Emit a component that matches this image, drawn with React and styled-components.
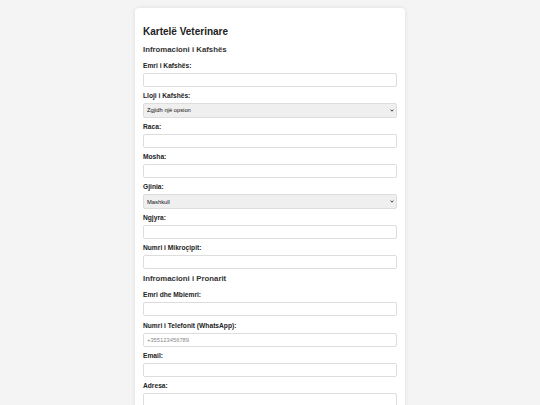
import React from "react";
import styled, { createGlobalStyle } from "styled-components";

const Global = createGlobalStyle`
  html, body {
    margin: 0;
    padding: 0;
    background: #f4f4f4;
    font-family: "Liberation Sans", Arial, sans-serif;
  }
  * { box-sizing: border-box; }
`;

const Page = styled.div`
  padding: 8px 0 16px;
`;

const Card = styled.form`
  width: 270px;
  margin: 0 auto;
  background: #ffffff;
  border-radius: 4px;
  box-shadow: 0 0 4px rgba(0, 0, 0, 0.1);
  padding: 18px 8px 10px;
`;

const Title = styled.h1`
  margin: 0 0 7px;
  font-size: 10px;
  line-height: 12px;
  font-weight: bold;
  color: #222;
`;

const Section = styled.h2`
  margin: ${(p) => (p.$first ? "0" : "5px")} 0 7px;
  font-size: 7.8px;
  line-height: 10px;
  font-weight: bold;
  color: #333;
`;

const Field = styled.div`
  margin-bottom: 5.2px;
`;

const Label = styled.label`
  display: block;
  font-size: 6.67px;
  line-height: 8px;
  font-weight: bold;
  color: #222;
  margin-bottom: 3px;
`;

const Input = styled.input`
  display: block;
  width: 100%;
  height: 14px;
  margin: 0;
  padding: 0 3px;
  border: 1px solid #dddddd;
  border-radius: 2px;
  background: #ffffff;
  font-family: "Liberation Sans", Arial, sans-serif;
  font-size: 5.8px;
  color: #222;
  outline: none;
  &::placeholder {
    color: #8a8a8a;
  }
`;

const SelectWrap = styled.div`
  position: relative;
`;

const Select = styled.select`
  display: block;
  width: 100%;
  height: 14.5px;
  margin: 0;
  padding: 0 3px;
  border: 1px solid #dddddd;
  border-radius: 2px;
  background-color: #efefef;
  font-family: "Liberation Sans", Arial, sans-serif;
  font-size: 5.8px;
  color: #111;
  outline: none;
  appearance: none;
  -webkit-appearance: none;
`;

const Chevron = styled.svg`
  position: absolute;
  right: 3px;
  top: 50%;
  width: 4px;
  height: 3px;
  margin-top: -1.5px;
  pointer-events: none;
`;

const petFields = [
  { label: "Emri i Kafshës:" },
  { label: "Lloji i Kafshës:", options: ["Zgjidh një opsion", "Qen", "Mace", "Tjetër"] },
  { label: "Raca:" },
  { label: "Mosha:" },
  { label: "Gjinia:", options: ["Mashkull", "Femër"] },
  { label: "Ngjyra:" },
  { label: "Numri i Mikroçipit:" },
];

const ownerFields = [
  { label: "Emri dhe Mbiemri:" },
  { label: "Numri i Telefonit (WhatsApp):", placeholder: "+355123456789" },
  { label: "Email:" },
  { label: "Adresa:" },
];

function FormField({ f, id }) {
  return (
    <Field>
      <Label htmlFor={id}>{f.label}</Label>
      {f.options ? (
        <SelectWrap>
          <Select id={id} defaultValue={f.options[0]}>
            {f.options.map((o) => (
              <option key={o}>{o}</option>
            ))}
          </Select>
          <Chevron viewBox="0 0 8 6">
            <path d="M1 1.2 L4 4.4 L7 1.2" fill="none" stroke="#222" strokeWidth="1.8" />
          </Chevron>
        </SelectWrap>
      ) : (
        <Input id={id} type="text" placeholder={f.placeholder || ""} />
      )}
    </Field>
  );
}

export default function App() {
  return (
    <Page>
      <Global />
      <Card onSubmit={(e) => e.preventDefault()}>
        <Title>Kartelë Veterinare</Title>
        <Section $first>Infromacioni i Kafshës</Section>
        {petFields.map((f, i) => (
          <FormField key={f.label} f={f} id={"p" + i} />
        ))}
        <Section>Infromacioni i Pronarit</Section>
        {ownerFields.map((f, i) => (
          <FormField key={f.label} f={f} id={"o" + i} />
        ))}
      </Card>
    </Page>
  );
}
